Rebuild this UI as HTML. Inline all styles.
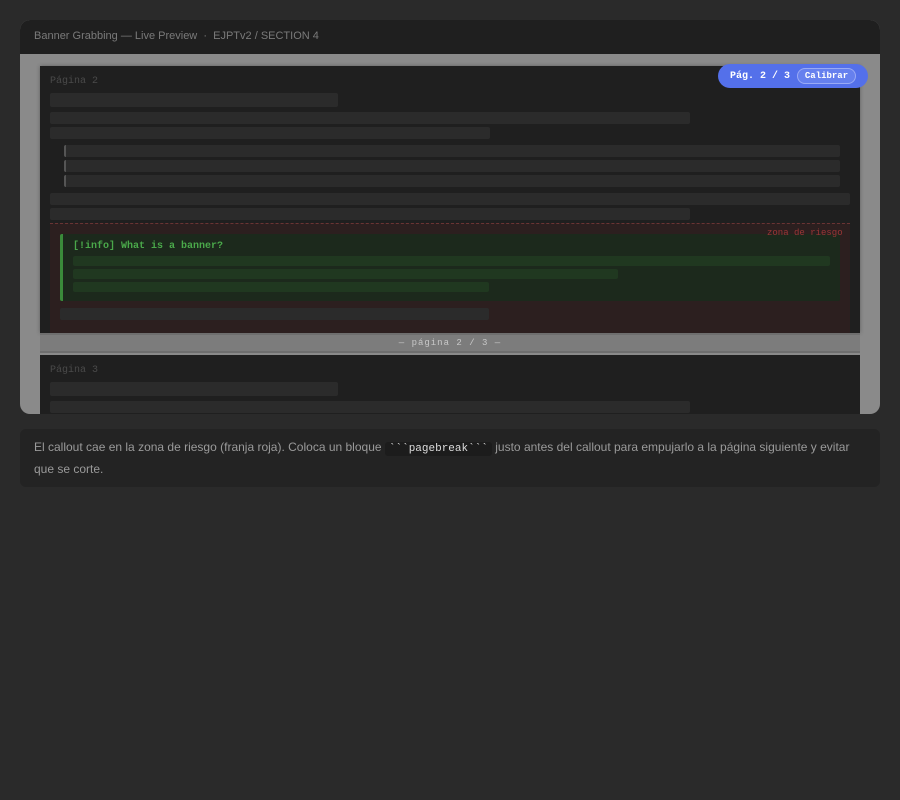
<!DOCTYPE html>
<html><head><meta charset="utf-8"><style>
*{margin:0;padding:0;box-sizing:border-box}
body{width:900px;height:800px;background:#2a2a2a;position:relative;overflow:hidden;font-family:"Liberation Sans",sans-serif}
.a{position:absolute}
.b{position:absolute;background:#2b2b2b;border-radius:2px}
.m{font-family:"Liberation Mono",monospace}
</style></head><body>
<div class="a" style="left:20px;top:20px;width:860px;height:394px;border-radius:10px;overflow:hidden;background:#8a8a8a">
  <div class="a" style="left:0;top:0;width:860px;height:34px;background:#1f1f1f"></div>
  <div class="a" style="left:14px;top:10px;font-size:11px;color:#7a7a7a;white-space:nowrap">Banner Grabbing — Live Preview &nbsp;·&nbsp; EJPTv2 / SECTION 4</div>
</div>
<!-- page 2 -->
<div class="a" style="left:40px;top:66px;width:820px;height:267px;background:#1f1f1f;box-shadow:0 0 4px rgba(0,0,0,.3)"></div>
<div class="a m" style="left:50px;top:76px;font-size:10px;color:#4a4a4a">Página 2</div>
<div class="b" style="left:50px;top:93px;width:288px;height:14px"></div>
<div class="b" style="left:50px;top:112px;width:640px;height:12px"></div>
<div class="b" style="left:50px;top:127px;width:440px;height:12px"></div>
<div class="b" style="left:64px;top:145px;width:776px;height:12px;border-left:2px solid #555"></div>
<div class="b" style="left:64px;top:160px;width:776px;height:12px;border-left:2px solid #555"></div>
<div class="b" style="left:64px;top:175px;width:776px;height:12px;border-left:2px solid #555"></div>
<div class="b" style="left:50px;top:193px;width:800px;height:12px"></div>
<div class="b" style="left:50px;top:208px;width:640px;height:12px"></div>
<div class="a" style="left:50px;top:223px;width:800px;height:110px;background:#2c1f1f;border-top:1px dashed #6a3434"></div>
<div class="a" style="left:60px;top:234px;width:780px;height:67px;background:#1c291c;border-left:3px solid #3a8a3a;border-radius:2px"></div>
<div class="a m" style="left:767px;top:228px;font-size:9px;line-height:11px;color:#9a3636;z-index:2">zona de riesgo</div>
<div class="a m" style="left:73px;top:241px;font-size:10px;font-weight:bold;color:#4aa84a">[!info] What is a banner?</div>
<div class="b" style="left:73px;top:256px;width:757px;height:10px;background:#203820"></div>
<div class="b" style="left:73px;top:269px;width:545px;height:10px;background:#203820"></div>
<div class="b" style="left:73px;top:282px;width:416px;height:10px;background:#203820"></div>
<div class="b" style="left:60px;top:308px;width:429px;height:12px"></div>
<!-- divider -->
<div class="a" style="left:40px;top:333px;width:820px;height:20px;background:#7c7c7c;border-top:2px solid #6e6e6e;border-bottom:2px solid #6e6e6e"></div>
<div class="a m" style="left:40px;top:338px;width:820px;text-align:center;font-size:9px;color:#c8c8c8;letter-spacing:1px">— página 2 / 3 —</div>
<!-- page 3 -->
<div class="a" style="left:40px;top:355px;width:820px;height:59px;background:#1f1f1f"></div>
<div class="a m" style="left:50px;top:365px;font-size:10px;color:#4a4a4a">Página 3</div>
<div class="b" style="left:50px;top:382px;width:288px;height:14px"></div>
<div class="b" style="left:50px;top:401px;width:640px;height:12px"></div>
<!-- pill -->
<div class="a m" style="left:718px;top:64px;width:150px;height:24px;background:#5470ea;border-radius:12px;color:#fff;font-size:10px;font-weight:bold;line-height:24px;padding-left:12px;padding-top:1px">Pág. 2 / 3</div>
<div class="a m" style="left:797px;top:68px;width:59px;height:16px;border:1px solid #9aaaf5;border-radius:8px;background:#6680ee;color:#fff;font-size:9px;font-weight:bold;text-align:center;line-height:14px">Calibrar</div>
<!-- note -->
<div class="a" style="left:20px;top:429px;width:860px;height:58px;background:#232323;border-radius:6px;padding:8px 14px;font-size:12px;line-height:20px;color:#9a9a9a">El callout cae en la zona de riesgo (franja roja). Coloca un bloque <span class="m" style="background:#1c1c1c;color:#ddd;font-size:11px;padding:1px 4px;border-radius:3px">&#96;&#96;&#96;pagebreak&#96;&#96;&#96;</span> justo antes del callout para empujarlo a la página siguiente y evitar que se corte.</div>
</body></html>
